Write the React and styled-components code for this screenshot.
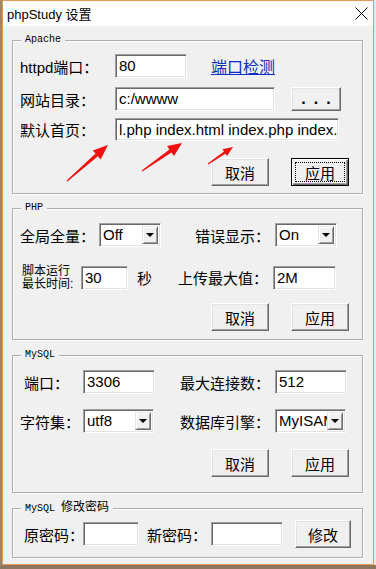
import React from "react";
import styled, { createGlobalStyle, css } from "styled-components";

const FONT = `"Liberation Sans", "Noto Sans CJK SC", sans-serif`;

const GlobalStyle = createGlobalStyle`
  html, body {
    margin: 0;
    padding: 0;
  }
  body {
    min-height: 569px;
    background:
      linear-gradient(to bottom, transparent 565px, #8d7560 565px),
      linear-gradient(to right, #9b8570 2px, #e9e9e9 2px);
    font-family: ${FONT};
    color: #000;
  }
`;

function arrowPoints(tx, ty, px, py, head, hw, sw) {
  const dx = px - tx;
  const dy = py - ty;
  const len = Math.hypot(dx, dy);
  const ux = dx / len;
  const uy = dy / len;
  const nx = -uy;
  const ny = ux;
  const bx = px - ux * head;
  const by = py - uy * head;
  const pts = [
    [tx + nx * 0.6, ty + ny * 0.6],
    [bx + (nx * sw) / 2, by + (ny * sw) / 2],
    [bx + nx * hw, by + ny * hw],
    [px, py],
    [bx - nx * hw, by - ny * hw],
    [bx - (nx * sw) / 2, by - (ny * sw) / 2],
    [tx - nx * 0.6, ty - ny * 0.6],
  ];
  return pts.map((p) => p.map((v) => v.toFixed(1)).join(",")).join(" ");
}

const arrows = [
  [67, 181, 108, 145, 15, 6, 3.5],
  [142, 171, 182, 143, 14, 6, 3.5],
  [208, 164, 233, 147, 10, 4, 2.5],
];

export default function App() {
  return (
    <>
      <GlobalStyle />
      <Window>
        <TitleBar>
          <span>phpStudy 设置</span>
          <svg width="13" height="13" viewBox="0 0 13 13">
            <path d="M0.5 0.5 L12.5 12.5 M12.5 0.5 L0.5 12.5" stroke="#000" strokeWidth="1" />
          </svg>
        </TitleBar>

        <Content>
          <Group $mt={0} $pb={7}>
            <Caption>Apache</Caption>
            <Row $mt={13}>
              <Label $w={95}>httpd端口：</Label>
              <Field $w={72}>80</Field>
              <Link $ml={24}>端口检测</Link>
            </Row>
            <Row $mt={9}>
              <Label $w={95}>网站目录：</Label>
              <Field $w={160}>c:/wwww</Field>
              <Button $ml={16} $w={50} $h={24} $dots>...</Button>
            </Row>
            <Row $mt={7}>
              <Label $w={95}>默认首页：</Label>
              <Field $w={224} $h={23}>l.php index.html index.php index.htm</Field>
            </Row>
            <ButtonRow $mt={17}>
              <Button>取消</Button>
              <Button $default>应用</Button>
            </ButtonRow>
          </Group>

          <Group $mt={14} $pb={8}>
            <Caption>PHP</Caption>
            <Row $mt={14}>
              <Label $w={79}>全局全量：</Label>
              <Select $w={62}>
                <SelectText>Off</SelectText>
                <DropBtn />
              </Select>
              <Label $ml={34} $w={80}>错误显示：</Label>
              <Select $w={62}>
                <SelectText>On</SelectText>
                <DropBtn />
              </Select>
            </Row>
            <Row $mt={18}>
              <SmallLabel $w={61} $pl={2}>
                脚本运行
                <br />
                最长时间:
              </SmallLabel>
              <Field $w={47}>30</Field>
              <Label $ml={9} $w={41}>秒</Label>
              <Label $w={95}>上传最大值：</Label>
              <Field $w={63}>2M</Field>
            </Row>
            <ButtonRow $mt={13}>
              <Button>取消</Button>
              <Button>应用</Button>
            </ButtonRow>
          </Group>

          <Group $mt={15} $pb={15}>
            <Caption>MySQL</Caption>
            <Row $mt={14}>
              <Label $w={63} $pl={4}>端口：</Label>
              <Field $w={72}>3306</Field>
              <Label $ml={25} $w={95}>最大连接数：</Label>
              <Field $w={72}>512</Field>
            </Row>
            <Row $mt={15}>
              <Label $w={63}>字符集：</Label>
              <Select $w={71}>
                <SelectText>utf8</SelectText>
                <DropBtn />
              </Select>
              <Label $ml={26} $w={95}>数据库引擎：</Label>
              <Select $w={71}>
                <SelectText>MyISAM</SelectText>
                <DropBtn />
              </Select>
            </Row>
            <ButtonRow $mt={16}>
              <Button>取消</Button>
              <Button>应用</Button>
            </ButtonRow>
          </Group>

          <Group $mt={15} $pb={9}>
            <Caption>
              MySQL <CaptionCjk>修改密码</CaptionCjk>
            </Caption>
            <Row $mt={11}>
              <Label $w={63} $pl={4}>原密码：</Label>
              <Field $w={56} />
              <Label $ml={8} $w={64}>新密码：</Label>
              <Field $w={72} />
              <Button $ml={12} $w={56}>修改</Button>
            </Row>
          </Group>
        </Content>

        <Overlay width="370" height="563" viewBox="3 1 370 563">
          {arrows.map((a, i) => (
            <polygon key={i} points={arrowPoints(...a)} fill="#f01010" />
          ))}
        </Overlay>
      </Window>
    </>
  );
}

const Window = styled.div`
  position: relative;
  box-sizing: border-box;
  width: 372px;
  height: 565px;
  margin-left: 2px;
  border: 1px solid #e39a57;
  background: #f0f0f0;
  overflow: hidden;
`;

const TitleBar = styled.div`
  height: 25px;
  background: #fff;
  display: flex;
  align-items: center;
  justify-content: space-between;
  padding: 0 5px 0 4px;
  font-size: 13px;
`;

const Content = styled.div`
  display: flex;
  flex-direction: column;
  padding: 14px 10px 0 9px;
`;

const Group = styled.div`
  position: relative;
  display: flex;
  flex-direction: column;
  margin-top: ${(p) => p.$mt}px;
  padding-bottom: ${(p) => p.$pb}px;
  border: 1px solid #adadad;
  box-shadow: inset 1px 1px #fff, 1px 1px #fff;
`;

const Caption = styled.span`
  position: absolute;
  top: -7px;
  left: 8px;
  padding: 0 4px;
  background: #f0f0f0;
  font: 10px/12px "Liberation Mono", "Noto Sans CJK SC", monospace;
`;

const CaptionCjk = styled.span`
  font-size: 12px;
`;

const Row = styled.div`
  display: flex;
  align-items: center;
  margin-top: ${(p) => p.$mt}px;
  padding-left: 7px;
`;

const ButtonRow = styled(Row)`
  justify-content: flex-end;
  gap: 22px;
  padding-right: 13px;
`;

const Label = styled.span`
  flex: none;
  box-sizing: border-box;
  width: ${(p) => p.$w}px;
  margin-left: ${(p) => p.$ml || 0}px;
  padding-left: ${(p) => p.$pl || 0}px;
  font-size: 15px;
  white-space: nowrap;
`;

const SmallLabel = styled(Label)`
  font-size: 12px;
  line-height: 12.5px;
  white-space: normal;
`;

const Link = styled.span`
  margin-left: ${(p) => p.$ml}px;
  font-size: 16px;
  color: #0b2fc0;
  text-decoration: underline;
`;

const Field = styled.div`
  flex: none;
  box-sizing: border-box;
  width: ${(p) => p.$w}px;
  height: ${(p) => p.$h || 24}px;
  padding: 0 2px 0 3px;
  background: #fff;
  border: 1px solid;
  border-color: #a0a0a0 #fff #fff #a0a0a0;
  box-shadow: inset 1px 1px #696969, inset -1px -1px #e3e3e3;
  font-size: 15px;
  line-height: ${(p) => (p.$h || 24) - 2}px;
  white-space: nowrap;
  overflow: hidden;
`;

const Select = styled(Field)`
  display: flex;
  align-items: center;
  padding-right: 2px;
`;

const SelectText = styled.span`
  flex: 1;
  overflow: hidden;
`;

const DropBtn = styled.span`
  flex: none;
  box-sizing: border-box;
  width: 16px;
  height: 18px;
  display: flex;
  align-items: center;
  justify-content: center;
  background: #f0f0f0;
  border: 1px solid;
  border-color: #e3e3e3 #696969 #696969 #e3e3e3;
  box-shadow: inset 1px 1px #fff, inset -1px -1px #a0a0a0;

  &::after {
    content: "";
    border-left: 4px solid transparent;
    border-right: 4px solid transparent;
    border-top: 4px solid #000;
  }
`;

const Button = styled.button`
  flex: none;
  position: relative;
  box-sizing: border-box;
  width: ${(p) => p.$w || 58}px;
  height: ${(p) => p.$h || 28}px;
  margin-left: ${(p) => p.$ml || 0}px;
  padding: 0;
  background: #f0f0f0;
  color: #000;
  font: 15px ${FONT};
  border: 1px solid;
  border-color: #fff #696969 #696969 #fff;
  box-shadow: inset -1px -1px #a0a0a0, inset 1px 1px #e3e3e3;

  ${(p) =>
    p.$dots &&
    css`
      font-size: 16px;
      font-weight: bold;
      letter-spacing: 8px;
      padding-left: 8px;
      line-height: 14px;
    `}

  ${(p) =>
    p.$default &&
    css`
      border: 1px solid #000;
      box-shadow: inset 1px 1px #fff, inset -1px -1px #696969, inset -2px -2px #a0a0a0;

      &::after {
        content: "";
        position: absolute;
        inset: 3px;
        border: 1px dotted #000;
      }
    `}
`;

const Overlay = styled.svg`
  position: absolute;
  left: 0;
  top: 0;
  pointer-events: none;
`;
